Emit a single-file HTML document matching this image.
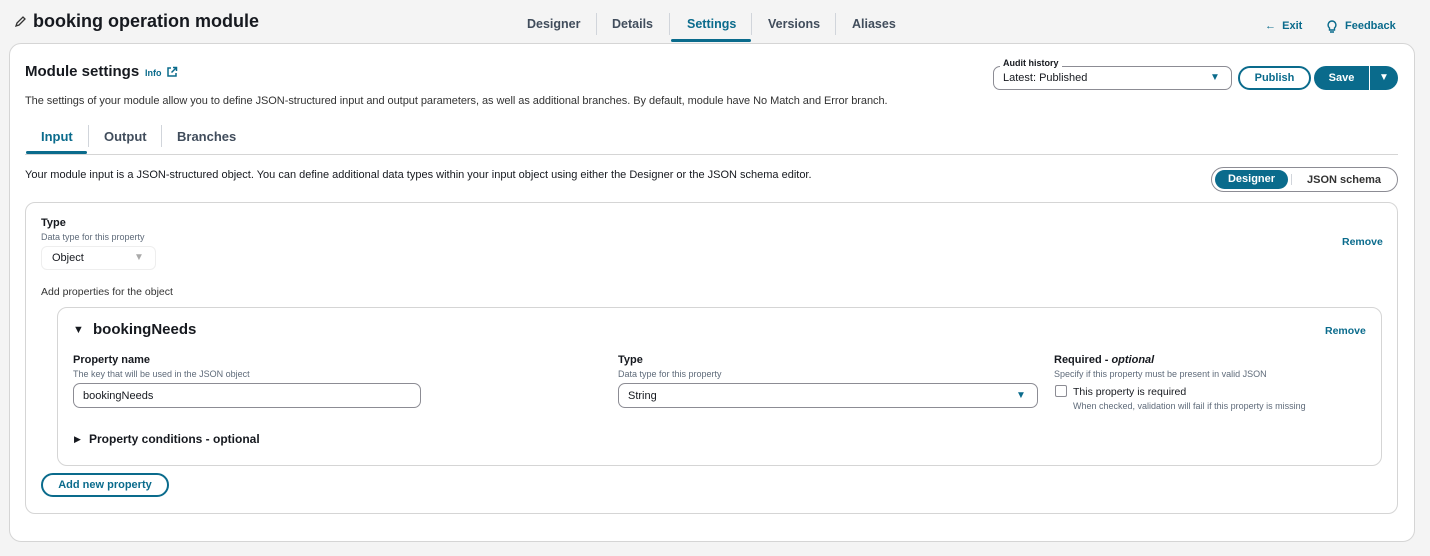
<!DOCTYPE html>
<html><head><style>
*{margin:0;padding:0;box-sizing:border-box}
body{width:1430px;height:556px;background:#f4f4f4;font-family:"Liberation Sans",sans-serif;color:#16191f;position:relative;overflow:hidden}
.a{position:absolute;white-space:nowrap}
.b{font-weight:bold}
.tab{font-size:12.5px;font-weight:bold;color:#414d5c;top:17px}
.sep{position:absolute;width:1px;background:#d1d5db}
.blue{color:#0a6b8c}
.sm{font-size:9px;color:#5f6b7a}
.lbl{font-size:11px;font-weight:bold}
</style></head><body>
<svg class="a" style="left:13px;top:15px" width="14" height="14" viewBox="0 0 14 14"><path d="M3 11 L4 8 L10 2 L12 4 L6 10 Z" fill="none" stroke="#333" stroke-width="1.3"/></svg>
<div class="a b" style="left:33px;top:11px;font-size:18px">booking operation module</div>
<div class="a tab" style="left:527px">Designer</div>
<div class="sep" style="left:596px;top:13px;height:22px"></div>
<div class="a tab" style="left:612px">Details</div>
<div class="sep" style="left:669px;top:13px;height:22px"></div>
<div class="a tab" style="left:687px;color:#0a6b8c">Settings</div>
<div class="sep" style="left:751px;top:13px;height:22px"></div>
<div class="a tab" style="left:768px">Versions</div>
<div class="sep" style="left:835px;top:13px;height:22px"></div>
<div class="a tab" style="left:852px">Aliases</div>
<div class="a" style="left:671px;top:39px;width:80px;height:3px;background:#0a6b8c;border-radius:2px"></div>
<div class="a b blue" style="left:1265px;top:20px;font-size:11px">&#8592;&nbsp; Exit</div>
<svg class="a" style="left:1327px;top:20px" width="10" height="14" viewBox="0 0 10 14"><path d="M5 1a4 4 0 0 0-2.5 7v2h5V8A4 4 0 0 0 5 1zM3 12h4" fill="none" stroke="#0a6b8c" stroke-width="1.4"/></svg>
<div class="a b blue" style="left:1345px;top:20px;font-size:11px">Feedback</div>

<div class="a" style="left:9px;top:43px;width:1406px;height:499px;background:#fff;border:1px solid #d5d5d5;border-radius:12px"></div>
<div class="a b" style="left:25px;top:63px;font-size:15px">Module settings</div>
<div class="a b blue" style="left:145px;top:68px;font-size:9px">Info</div>
<svg class="a" style="left:166px;top:66px" width="12" height="12" viewBox="0 0 12 12"><path d="M5 2H2v8h8V7M7 1.5h3.5V5M10.5 1.5 5.5 6.5" fill="none" stroke="#0a6b8c" stroke-width="1.5"/></svg>
<div class="a" style="left:25px;top:95px;font-size:11px;color:#333;letter-spacing:-0.05px">The settings of your module allow you to define JSON-structured input and output parameters, as well as additional branches. By default, module have No Match and Error branch.</div>

<div class="a" style="left:993px;top:66px;width:239px;height:24px;border:1px solid #8c8c94;border-radius:7px"></div>
<div class="a b" style="left:1000px;top:58px;font-size:9px;background:#fff;padding:0 3px">Audit history</div>
<div class="a" style="left:1003px;top:72px;font-size:11px">Latest: Published</div>
<div class="a" style="left:1210px;top:72px;font-size:10px;color:#0a6b8c">&#9660;</div>
<div class="a b blue" style="left:1238px;top:66px;width:73px;height:24px;border:2px solid #0a6b8c;border-radius:14px;font-size:11px;text-align:center;line-height:20px">Publish</div>
<div class="a b" style="left:1314px;top:66px;width:55px;height:24px;background:#0a6b8c;color:#fff;border-radius:14px 0 0 14px;font-size:11px;text-align:center;line-height:24px">Save</div>
<div class="a" style="left:1370px;top:66px;width:28px;height:24px;background:#0a6b8c;color:#fff;border-radius:0 14px 14px 0;font-size:10px;text-align:center;line-height:24px">&#9660;</div>

<div class="a b blue" style="left:41px;top:129px;font-size:13px">Input</div>
<div class="sep" style="left:88px;top:125px;height:22px"></div>
<div class="a b" style="left:104px;top:129px;font-size:13px;color:#414d5c">Output</div>
<div class="sep" style="left:161px;top:125px;height:22px"></div>
<div class="a b" style="left:177px;top:129px;font-size:13px;color:#414d5c">Branches</div>
<div class="a" style="left:25px;top:154px;width:1373px;height:1px;background:#d5d5d5"></div>
<div class="a" style="left:26px;top:151px;width:61px;height:3px;background:#0a6b8c;border-radius:2px"></div>
<div class="a" style="left:25px;top:169px;font-size:11px;color:#16191f">Your module input is a JSON-structured object. You can define additional data types within your input object using either the Designer or the JSON schema editor.</div>
<div class="a" style="left:1211px;top:167px;width:187px;height:25px;border:1px solid #8c8c94;border-radius:13px"></div>
<div class="a b" style="left:1215px;top:170px;width:73px;height:19px;background:#0a6b8c;color:#fff;border-radius:10px;font-size:11px;text-align:center;line-height:19px">Designer</div>
<div class="sep" style="left:1291px;top:174px;height:11px"></div>
<div class="a b" style="left:1307px;top:174px;font-size:11px;color:#333">JSON schema</div>

<div class="a" style="left:25px;top:202px;width:1373px;height:312px;border:1px solid #d5d5d5;border-radius:10px"></div>
<div class="a lbl" style="left:41px;top:217px">Type</div>
<div class="a sm" style="left:41px;top:232px">Data type for this property</div>
<div class="a" style="left:41px;top:246px;width:115px;height:24px;border:1px solid #eee;border-radius:6px"></div>
<div class="a" style="left:52px;top:252px;font-size:11px">Object</div>
<div class="a" style="left:134px;top:252px;font-size:10px;color:#aaa">&#9660;</div>
<div class="a b blue" style="left:1342px;top:236px;font-size:10.5px">Remove</div>
<div class="a" style="left:41px;top:286px;font-size:10.5px;color:#333">Add properties for the object</div>

<div class="a" style="left:57px;top:307px;width:1325px;height:159px;border:1px solid #d5d5d5;border-radius:10px"></div>
<div class="a" style="left:73px;top:324px;font-size:11px">&#9660;</div>
<div class="a b" style="left:93px;top:321px;font-size:15px">bookingNeeds</div>
<div class="a b blue" style="left:1325px;top:325px;font-size:10.5px">Remove</div>
<div class="a lbl" style="left:73px;top:354px">Property name</div>
<div class="a sm" style="left:73px;top:369px">The key that will be used in the JSON object</div>
<div class="a" style="left:73px;top:383px;width:348px;height:25px;border:1px solid #8c8c94;border-radius:7px"></div>
<div class="a" style="left:83px;top:390px;font-size:11px">bookingNeeds</div>
<div class="a lbl" style="left:618px;top:354px">Type</div>
<div class="a sm" style="left:618px;top:369px">Data type for this property</div>
<div class="a" style="left:618px;top:383px;width:420px;height:25px;border:1px solid #8c8c94;border-radius:7px"></div>
<div class="a" style="left:628px;top:390px;font-size:11px">String</div>
<div class="a" style="left:1016px;top:390px;font-size:10px;color:#0a6b8c">&#9660;</div>
<div class="a lbl" style="left:1054px;top:354px">Required - <i>optional</i></div>
<div class="a sm" style="left:1054px;top:369px">Specify if this property must be present in valid JSON</div>
<div class="a" style="left:1055px;top:385px;width:12px;height:12px;border:1px solid #8c8c94;border-radius:2px"></div>
<div class="a" style="left:1073px;top:386px;font-size:10.5px">This property is required</div>
<div class="a sm" style="left:1073px;top:401px">When checked, validation will fail if this property is missing</div>
<div class="a" style="left:74px;top:434px;font-size:9px">&#9654;</div>
<div class="a b" style="left:89px;top:432px;font-size:12px">Property conditions - optional</div>

<div class="a b blue" style="left:41px;top:473px;width:128px;height:24px;border:2px solid #0a6b8c;border-radius:13px;font-size:11px;text-align:center;line-height:21px">Add new property</div>
</body></html>
